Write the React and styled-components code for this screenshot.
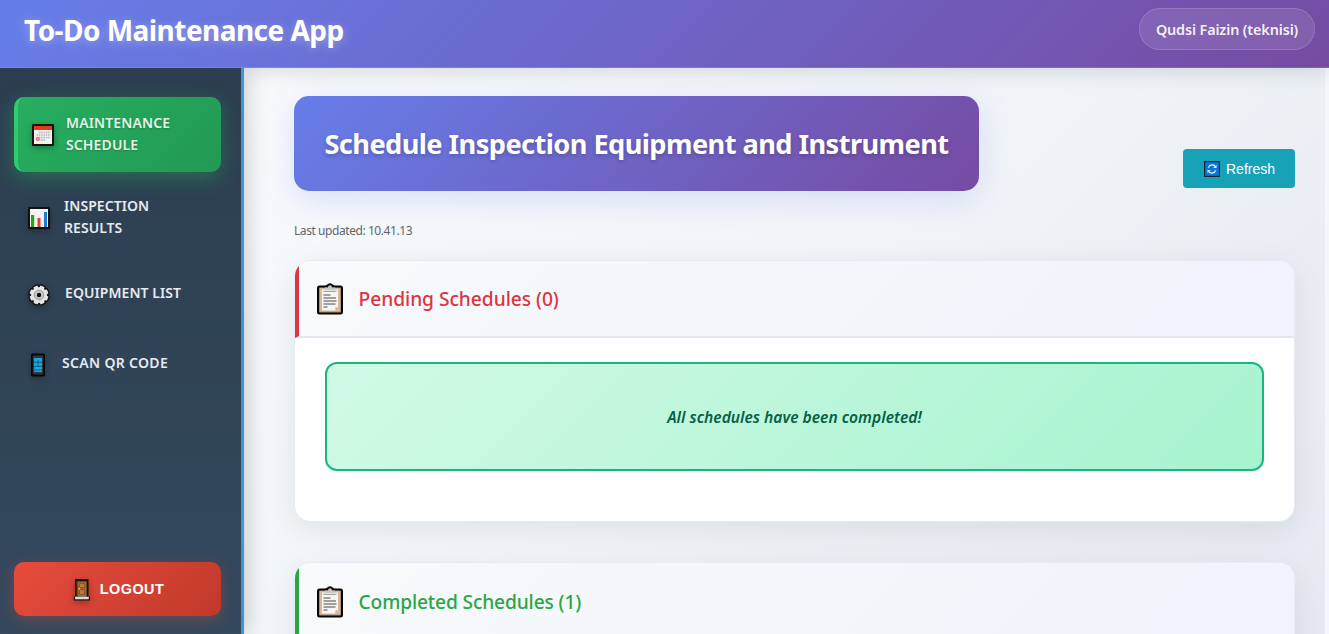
import React from 'react';
import styled, { createGlobalStyle } from 'styled-components';

const GlobalStyle = createGlobalStyle`
  * { box-sizing: border-box; }
  body {
    margin: 0;
    overflow: hidden;
    background: #f5f8fb;
    font-family: 'Segoe UI', 'Noto Sans', 'Open Sans', sans-serif;
  }
`;

const Page = styled.div`
  height: 634px;
  display: flex;
  flex-direction: column;
  overflow: hidden;
`;

const Header = styled.header`
  position: relative;
  z-index: 2;
  flex: none;
  height: 68px;
  padding: 8px 14px 0 24px;
  display: flex;
  align-items: flex-start;
  justify-content: space-between;
  background: linear-gradient(135deg, #667eea 0%, #764ba2 100%);
  box-shadow: 0 4px 20px rgba(0, 0, 0, 0.12);
  border-bottom: 1px solid rgba(255, 255, 255, 0.1);
`;

const Brand = styled.h1`
  margin: 0;
  font-size: 28px;
  line-height: 45px;
  font-weight: 700;
  letter-spacing: -0.54px;
  color: #fff;
  text-shadow: 0 2px 10px rgba(255, 255, 255, 0.3);
  white-space: nowrap;
`;

const UserBadge = styled.div`
  width: 176px;
  height: 42px;
  border-radius: 21px;
  border: 1px solid rgba(255, 255, 255, 0.15);
  background: rgba(255, 255, 255, 0.1);
  display: flex;
  align-items: center;
  justify-content: center;
  font-size: 14.4px;
  font-weight: 600;
  letter-spacing: -0.13px;
  color: rgba(255, 255, 255, 0.92);
  white-space: nowrap;
`;

const Body = styled.div`
  flex: 1;
  min-height: 0;
  display: flex;
`;

const Sidebar = styled.aside`
  position: relative;
  z-index: 3;
  flex: none;
  width: 244px;
  padding: 29px 20px 18px 14px;
  border-right: 3px solid #3b96d6;
  background: linear-gradient(180deg, #2c3e50 0%, #34495e 100%);
  box-shadow: 4px 0 20px rgba(0, 0, 0, 0.17);
  clip-path: inset(0 -30px 0 0);
  display: flex;
  flex-direction: column;
  justify-content: space-between;
`;

const Nav = styled.nav`
  display: flex;
  flex-direction: column;
  gap: 8px;
`;

const NavItem = styled.a`
  display: flex;
  align-items: center;
  height: ${(p) => (p.$tall ? 75 : 62)}px;
  padding-left: 14px;
  padding-bottom: 2px;
  gap: ${(p) => p.$gap}px;
  border-radius: 10px;
  font-size: 14px;
  line-height: 22px;
  font-weight: 600;
  letter-spacing: ${(p) => p.$track}px;
  color: #e4ebf1;
  ${(p) =>
    p.$active &&
    `
    border-left: 4px solid #2ecc71;
    background: linear-gradient(135deg, #27ae60 0%, #229954 100%);
    box-shadow: 0 6px 20px rgba(39, 174, 96, 0.4);
    color: #e2f4e6;
    text-shadow: 0 1px 2px rgba(0, 0, 0, 0.2);
  `}
`;

const NavLabel = styled.span`
  width: 130px;
`;

const NavIcon = styled.svg`
  flex: none;
  width: 22px;
  height: 24px;
  margin-top: 3px;
  filter: drop-shadow(0 2px 3px rgba(0, 0, 0, 0.3));
`;

const LogoutButton = styled.button`
  height: 54px;
  border: 0;
  border-radius: 10px;
  padding: 0 0 2px;
  display: flex;
  align-items: center;
  justify-content: center;
  gap: 7px;
  background: linear-gradient(135deg, #e74c3c 0%, #c0392b 100%);
  box-shadow: 0 4px 15px rgba(231, 76, 60, 0.3);
  color: #fff;
  font: 700 14.4px/18px 'Liberation Sans', Arial, sans-serif;
  letter-spacing: 0.5px;
`;

const LogoutLabel = styled.span`
  padding-top: 2px;
`;

const Main = styled.main`
  flex: 1;
  min-width: 0;
  margin-right: 4px;
  padding: 28px 30px 0 50px;
  background: linear-gradient(135deg, #f8fafc 0%, #f0f4f8 50%, #e5e9f1 100%);
`;

const TopRow = styled.div`
  display: flex;
  justify-content: space-between;
  align-items: flex-start;
`;

const Banner = styled.h2`
  margin: 0;
  width: 685px;
  height: 95px;
  border-radius: 15px;
  display: flex;
  align-items: center;
  justify-content: center;
  background: linear-gradient(135deg, #667eea 0%, #764ba2 100%);
  box-shadow: 0 8px 32px rgba(102, 126, 234, 0.2);
  color: #fff;
  font-size: 27.2px;
  font-weight: 700;
  letter-spacing: -0.56px;
  text-shadow: 0 2px 4px rgba(0, 0, 0, 0.2);
  white-space: nowrap;
`;

const RefreshButton = styled.button`
  width: 112px;
  height: 39px;
  margin-top: 53px;
  border: 0;
  border-radius: 4px;
  padding: 0 0 0 1px;
  display: flex;
  align-items: center;
  justify-content: center;
  gap: 6px;
  background: #17a2b8;
  color: #fff;
  font: 14px 'Liberation Sans', Arial, sans-serif;
`;

const Updated = styled.p`
  margin: 30px 0 19px;
  height: 20px;
  font-size: 12px;
  line-height: 20px;
  letter-spacing: -0.43px;
  color: #5f666d;
`;

const Card = styled.section`
  margin-bottom: 40px;
  height: 262px;
  border: 1px solid #e6ebf2;
  border-radius: 16px;
  overflow: hidden;
  background: #fff;
  box-shadow: 0 8px 32px rgba(0, 0, 0, 0.08);
`;

const CardHeader = styled.div`
  height: ${(p) => p.$height}px;
  padding-left: 18px;
  display: flex;
  align-items: center;
  gap: 15.5px;
  border-left: 4px solid ${(p) => p.$tone};
  border-bottom: 2px solid #e2e8f0;
  background: linear-gradient(135deg, #f8fafc 0%, #f2f5fa 65%, #eff3fc 100%);
  color: ${(p) => p.$tone};
`;

const CardTitle = styled.h3`
  margin: 0;
  font-size: 19.2px;
  line-height: 28px;
  font-weight: 500;
  letter-spacing: ${(p) => p.$track}px;
`;

const Notice = styled.div`
  margin: 24px 30px 0;
  height: 109px;
  border: 2px solid #1cb481;
  border-radius: 12px;
  display: flex;
  align-items: center;
  justify-content: center;
  background: linear-gradient(135deg, #d1fae5 0%, #a7f3d0 100%);
  color: #065f46;
  font-size: 15.6px;
  font-style: italic;
  font-weight: 600;
`;

function CalendarIcon() {
  return (
    <NavIcon viewBox="0 0 22 24">
      <rect x="0" y="1" width="22" height="22" rx="1" fill="#15130f" />
      <rect x="2" y="3" width="18" height="18" fill="#f3f1ef" />
      <rect x="2" y="3" width="18" height="4" fill="#e8391d" />
      <path d="M7 9.500h11.500M4.500 12h14M4.500 14.500h14M4.500 17h9" stroke="#b9b7b8" strokeWidth="1.600" strokeDasharray="1.600 .7" />
      <circle cx="5.700" cy="16" r="1.500" fill="#f0b0b0" stroke="#e3616a" strokeWidth="1" />
    </NavIcon>
  );
}

function ChartIcon() {
  return (
    <NavIcon viewBox="0 0 22 24">
      <rect x="0" y="1" width="22" height="22" rx="1" fill="#11130f" />
      <rect x="2" y="3" width="18" height="18" fill="#f4f4f4" />
      <rect x="3" y="9" width="3.200" height="12" fill="#1fa51e" />
      <rect x="9.500" y="12" width="3" height="9" fill="#ea3b30" />
      <rect x="16" y="6" width="3" height="15" fill="#2379cf" />
    </NavIcon>
  );
}

function GearIcon() {
  const teeth = [0, 45, 90, 135, 180, 225, 270, 315];
  return (
    <NavIcon viewBox="0 0 22 24">
      <g transform="rotate(22 11 12)">
        <g fill="#111" stroke="#111" strokeWidth="3" strokeLinejoin="round">
          <circle cx="11" cy="12" r="7.500" />
          {teeth.map((a) => (
            <path key={a} d="M8.500 5.500L9 2.800h4l.5 2.700z" transform={`rotate(${a} 11 12)`} />
          ))}
        </g>
        <g fill="#e5e5e5">
          <circle cx="11" cy="12" r="7.800" />
          {teeth.map((a) => (
            <path key={a} d="M8.300 5.500L9 2.600h4l.7 2.900z" transform={`rotate(${a} 11 12)`} />
          ))}
        </g>
      </g>
      <circle cx="11" cy="12" r="4.800" fill="#c8c8c8" stroke="#9b9b9b" strokeWidth="1" />
      <circle cx="11" cy="12" r="2.200" fill="#111" />
    </NavIcon>
  );
}

function PhoneIcon() {
  return (
    <NavIcon viewBox="0 0 22 24">
      <rect x="3" y="0.500" width="14" height="23" rx="1.500" fill="#080808" />
      <rect x="4.800" y="2.500" width="10.400" height="19" fill="#35363a" />
      <rect x="6" y="5" width="8" height="14" fill="#16a7e0" />
      <path d="M6 9.200h8M6 13.400h8M6 17h8M10 7v6.400" stroke="#174c6b" strokeWidth=".8" />
    </NavIcon>
  );
}

function DoorIcon() {
  return (
    <NavIcon viewBox="0 0 22 24">
      <path d="M4 1h13.500v17.500H19V22.500H2.800V18.500H4z" fill="#17110d" />
      <rect x="5.500" y="3" width="10.500" height="15.500" fill="#6d4327" />
      <rect x="7" y="4" width="8" height="14.500" fill="#a36a35" />
      <path d="M8.500 5.500h5v4h-5zM8.500 11.500h5v5h-5z" fill="#b77a3f" stroke="#7c4c28" strokeWidth=".8" />
      <circle cx="8.300" cy="10.700" r=".9" fill="#f0c44d" />
      <rect x="4" y="18.700" width="13.800" height="2.600" fill="#d5dade" />
    </NavIcon>
  );
}

const RefreshSvg = styled.svg`
  width: 16px;
  height: 16px;
`;

function RefreshIcon() {
  return (
    <RefreshSvg viewBox="0 0 16 16">
      <rect width="16" height="16" fill="#102434" />
      <rect x="1.200" y="1.200" width="13.600" height="13.600" fill="#0b78d8" />
      <path d="M4.300 6.600A4 4 0 0 1 11.600 6M11.700 9.400A4 4 0 0 1 4.400 10" fill="none" stroke="#eaf6ff" strokeWidth="1.200" />
      <path d="M12.500 3.700v3.200H9.300zM3.500 12.300V9.100h3.200z" fill="#eaf6ff" />
    </RefreshSvg>
  );
}

const ClipboardSvg = styled.svg`
  flex: none;
  width: 26px;
  height: 32px;
`;

function ClipboardIcon() {
  return (
    <ClipboardSvg viewBox="0 0 26 32">
      <path d="M2.500 2.500H8.500Q9 2 10 1.800Q11 .2 13 .2T16 1.800Q17 2 17.500 2.500H23.500Q26 2.500 26 5V29Q26 31.500 23.500 31.500H2.500Q0 31.500 0 29V5Q0 2.500 2.500 2.500z" fill="#080706" />
      <rect x="2" y="4.500" width="22" height="25" rx="1" fill="#a98f7c" />
      <rect x="3" y="5" width="20" height="23.500" rx=".5" fill="#d7b99c" />
      <path d="M5 6.500H21V24.500L18.500 27.500H5z" fill="#f6f5f4" />
      <path d="M18.500 27.500V24.500H21z" fill="#c4a183" />
      <path d="M8 6.800V4.500H11Q11 2.200 13 2.200T15 4.500H18V6.800z" fill="#c5c6c8" />
      <path d="M6.500 8.300H19.500" stroke="#8f9092" strokeWidth="1" />
      <path d="M6.500 12h7M6.500 15h12.500M6.500 18h13M6.500 21h12M6.500 24h4" stroke="#4a4b4d" strokeWidth="1" />
    </ClipboardSvg>
  );
}

export default function App() {
  return (
    <Page>
      <GlobalStyle />
      <Header>
        <Brand>To-Do Maintenance App</Brand>
        <UserBadge>Qudsi Faizin (teknisi)</UserBadge>
      </Header>
      <Body>
        <Sidebar>
          <Nav>
            <NavItem $active $tall $gap={12} $track={0.12}>
              <CalendarIcon />
              <NavLabel>MAINTENANCE SCHEDULE</NavLabel>
            </NavItem>
            <NavItem $tall $gap={14} $track={0.05}>
              <ChartIcon />
              <NavLabel>INSPECTION RESULTS</NavLabel>
            </NavItem>
            <NavItem $gap={15} $track={0.07}>
              <GearIcon />
              <NavLabel>EQUIPMENT LIST</NavLabel>
            </NavItem>
            <NavItem $gap={12} $track={0.32}>
              <PhoneIcon />
              <NavLabel>SCAN QR CODE</NavLabel>
            </NavItem>
          </Nav>
          <LogoutButton>
            <DoorIcon />
            <LogoutLabel>LOGOUT</LogoutLabel>
          </LogoutButton>
        </Sidebar>
        <Main>
          <TopRow>
            <Banner>Schedule Inspection Equipment and Instrument</Banner>
            <RefreshButton>
              <RefreshIcon />
              Refresh
            </RefreshButton>
          </TopRow>
          <Updated>Last updated: 10.41.13</Updated>
          <Card>
            <CardHeader $tone="#dc3545" $height={77}>
              <ClipboardIcon />
              <CardTitle $track={-0.04}>Pending Schedules (0)</CardTitle>
            </CardHeader>
            <Notice>All schedules have been completed!</Notice>
          </Card>
          <Card>
            <CardHeader $tone="#28a745" $height={79}>
              <ClipboardIcon />
              <CardTitle $track={-0.14}>Completed Schedules (1)</CardTitle>
            </CardHeader>
          </Card>
        </Main>
      </Body>
    </Page>
  );
}
